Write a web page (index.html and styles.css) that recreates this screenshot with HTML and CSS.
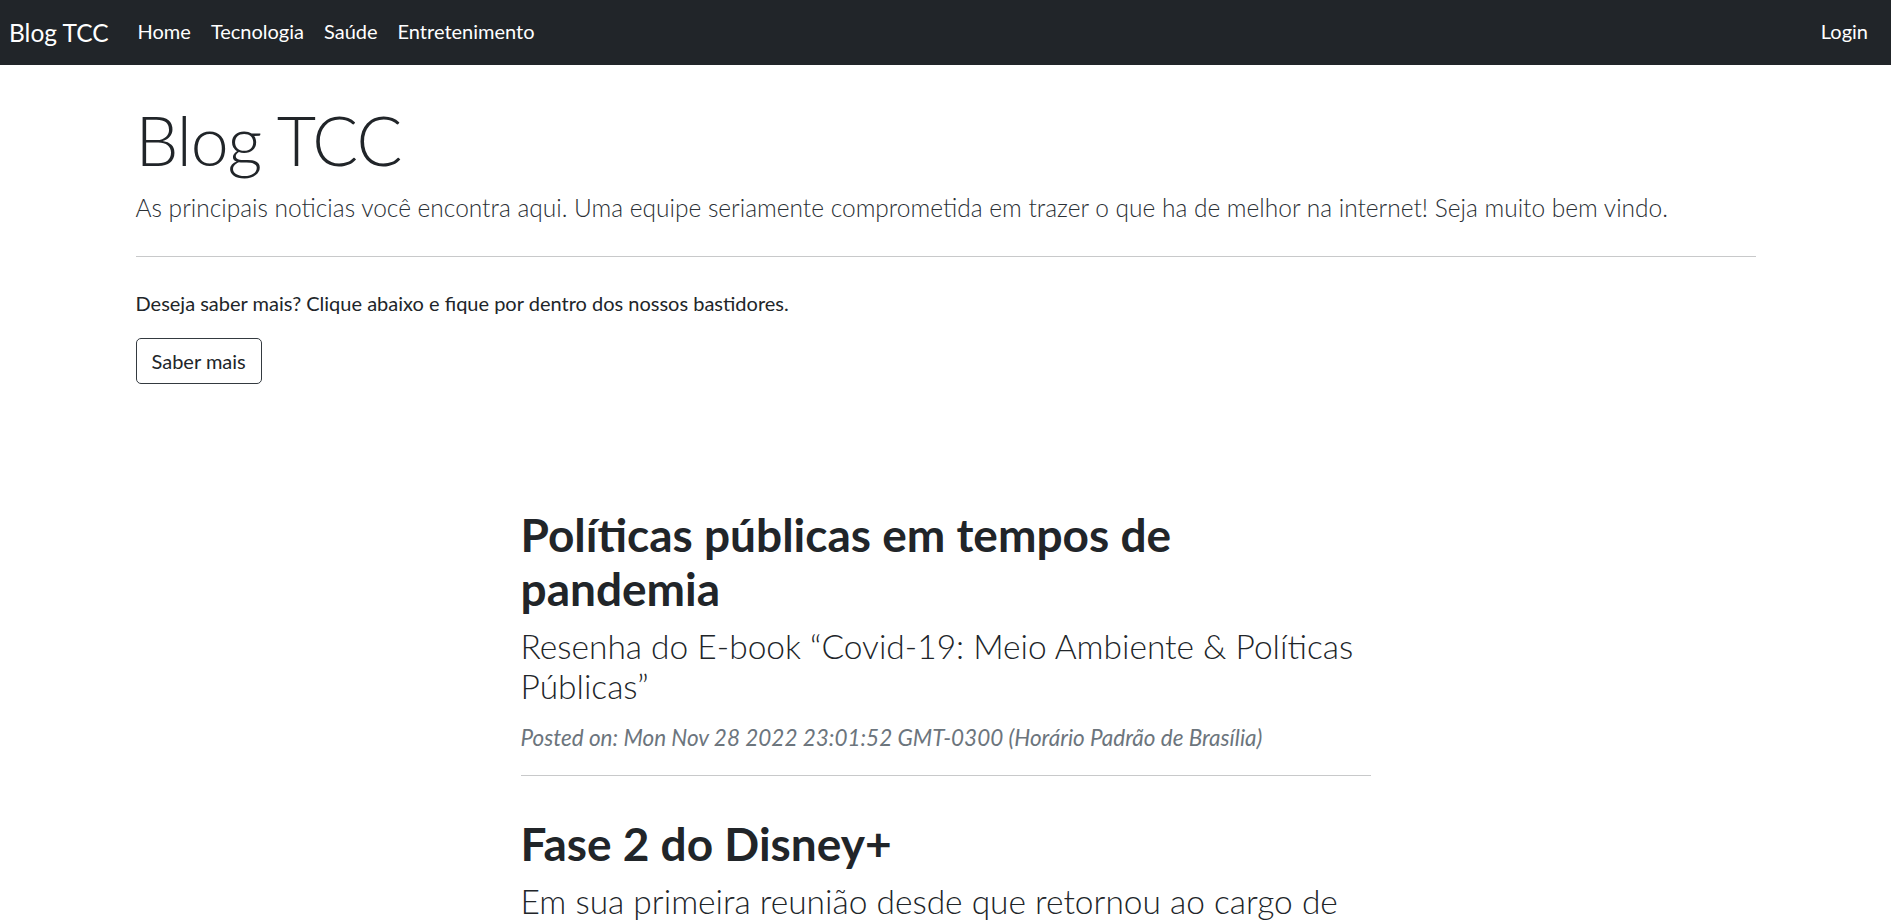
FILE: index.html
```html
<!DOCTYPE html>
<html lang="pt-BR">
<head>
<meta charset="utf-8">
<title>Blog TCC</title>
<link rel="stylesheet" href="styles.css">
</head>
<body>
<nav class="navbar">
  <a class="brand" href="#">Blog TCC</a>
  <ul class="nav-links">
    <li><a class="nav-link" href="#">Home</a></li>
    <li><a class="nav-link" href="#">Tecnologia</a></li>
    <li><a class="nav-link" href="#">Saúde</a></li>
    <li><a class="nav-link" href="#">Entretenimento</a></li>
  </ul>
  <ul class="nav-links nav-right">
    <li><a class="nav-link" href="#">Login</a></li>
  </ul>
</nav>

<header class="hero">
  <h1 class="display">Blog TCC</h1>
  <p class="lead">As principais noticias você encontra aqui. Uma equipe seriamente comprometida em trazer o que ha de melhor na internet! Seja muito bem vindo.</p>
  <hr class="hero-rule">
  <p class="hero-text">Deseja saber mais? Clique abaixo e fique por dentro dos nossos bastidores.</p>
  <a class="btn" href="#">Saber mais</a>
</header>

<main class="posts">
  <article class="post-preview">
    <a class="post-link" href="#">
      <h2 class="post-title">Políticas públicas em tempos de pandemia</h2>
      <h3 class="post-subtitle">Resenha do E-book “Covid-19: Meio Ambiente &amp; Políticas Públicas”</h3>
    </a>
    <p class="post-meta">Posted on: Mon Nov 28 2022 23:01:52 GMT-0300 (Horário Padrão de Brasília)</p>
  </article>
  <hr class="post-rule">
  <article class="post-preview">
    <a class="post-link" href="#">
      <h2 class="post-title">Fase 2 do Disney+</h2>
      <h3 class="post-subtitle">Em sua primeira reunião desde que retornou ao cargo de CEO, Bob Iger falou sobre o futuro do Disney+</h3>
    </a>
    <p class="post-meta">Posted on: Mon Nov 28 2022 23:05:10 GMT-0300 (Horário Padrão de Brasília)</p>
  </article>
  <hr class="post-rule">
</main>
</body>
</html>
```
FILE: styles.css
```css
* { box-sizing: border-box; }

html, body {
  margin: 0;
  padding: 0;
}

body {
  font-family: Lato, "Liberation Sans", sans-serif;
  font-size: 20px;
  line-height: 1.5;
  color: #212529;
  background: #fff;
}

a { text-decoration: none; color: inherit; }

/* ---------- navbar ---------- */
.navbar {
  display: flex;
  align-items: center;
  height: 65px;
  padding: 0 13px 0 9px;
  background: #212529;
}

.brand {
  color: #fff;
  font-size: 24.5px;
  line-height: 36px;
  margin-right: 19px;
}

.nav-links {
  display: flex;
  list-style: none;
  margin: 0 0 4px 0;
  padding: 0;
}

.nav-right { margin-left: auto; }

.nav-link {
  display: block;
  color: #fff;
  font-size: 20px;
  line-height: 30px;
  padding: 0 10px;
}

/* ---------- hero ---------- */
.hero {
  max-width: 1620px;
  margin: 0 auto;
  padding-top: 34px;
}

.display {
  margin: 0 0 9px;
  font-size: 68px;
  font-weight: 300;
  line-height: 1.2;
  letter-spacing: -1px;
}

.lead {
  margin: 0;
  font-size: 24.5px;
  font-weight: 300;
  line-height: 1.5;
  color: #2b3035;
}

.hero-rule {
  margin: 30px 0 31px;
  border: 0;
  border-top: 1px solid #c8c9ca;
}

.hero-text {
  margin: 0 0 20px;
}

.btn {
  display: inline-block;
  padding: 7px 15px;
  border: 1px solid #343a40;
  border-radius: 5px;
  font-size: 20px;
  line-height: 30px;
  color: #212529;
}

/* ---------- posts ---------- */
.posts {
  width: 850px;
  margin: 124px auto 0;
}

.post-link { display: block; }

.post-title {
  margin: 41px 0 10px;
  font-size: 46px;
  font-weight: 700;
  line-height: 54px;
}

.post-subtitle {
  margin: 0 0 15px;
  font-size: 33.5px;
  font-weight: 300;
  line-height: 40px;
}

.post-meta {
  margin: 0 0 20px;
  font-size: 22.5px;
  font-style: italic;
  line-height: 1.5;
  color: #6c757d;
}

.post-rule {
  margin: 0;
  border: 0;
  border-top: 1px solid #c8c9ca;
}
```
